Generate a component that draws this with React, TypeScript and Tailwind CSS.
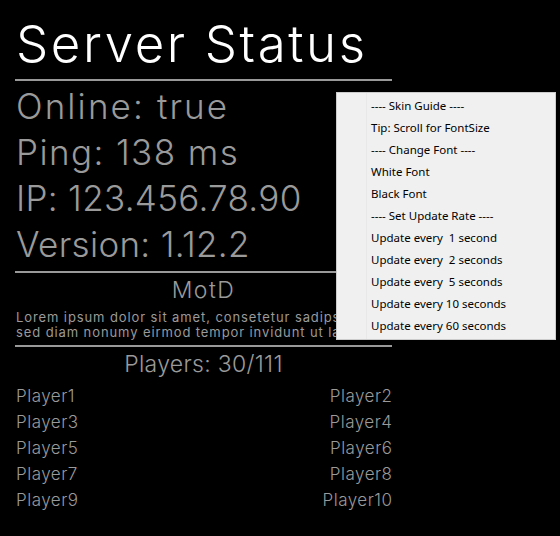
import React from "react";

const players = ["Player1","Player2","Player3","Player4","Player5","Player6","Player7","Player8","Player9","Player10"];
const menu = [
  "---- Skin Guide ----",
  "Tip: Scroll for FontSize",
  "---- Change Font ----",
  "White Font",
  "Black Font",
  "---- Set Update Rate ----",
  "Update every\u00a0 1 second",
  "Update every\u00a0 2 seconds",
  "Update every\u00a0 5 seconds",
  "Update every 10 seconds",
  "Update every 60 seconds",
];

export default function App() {
  return (
    <div className="relative w-[560px] h-[536px] bg-black overflow-hidden" style={{ fontFamily: "Inter, 'Noto Sans', sans-serif" }}>
      <div className="w-[377px] ml-[15px] flex flex-col">
        <div className="pt-[12px] text-white text-[51px] leading-[64px] font-light pl-[1px] tracking-[2.6px] whitespace-nowrap">Server Status</div>
        <div className="h-[2px] bg-[#999999] mt-[3px]" />
        <div className="flex flex-col text-[#9a9a9a] text-[35px] leading-[46px] font-light pl-[1px] pt-[2px] whitespace-nowrap">
          <div className="tracking-[2.1px]">Online: true</div>
          <div className="tracking-[1.4px]">Ping: 138 ms</div>
          <div className="tracking-[0.3px]">IP: 123.456.78.90</div>
          <div className="tracking-[0.3px]">Version: 1.12.2</div>
        </div>
        <div className="h-[2px] bg-[#999999] mt-[4px]" />
        <div className="mt-[3px] text-center text-[#9a9a9a] text-[23px] leading-[28px] font-light tracking-[1.5px]">MotD</div>
        <div className="mt-[6px] text-[#9a9a9a] text-[13px] leading-[15px] whitespace-nowrap pl-[1px] tracking-[0.9px]">
          <div>Lorem ipsum dolor sit amet, consetetur sadipscing elitr,</div>
          <div>sed diam nonumy eirmod tempor invidunt ut labore et</div>
        </div>
        <div className="h-[2px] bg-[#999999] mt-[5px]" />
        <div className="mt-[3px] text-center text-[#9a9a9a] text-[23px] leading-[28px] font-light tracking-[0.3px]">Players: 30/111</div>
        <div className="mt-[5px] grid grid-cols-2 text-[#9a9a9a] text-[17px] leading-[26px] font-light pl-[1px] tracking-[0.5px]">
          {players.map((p, i) => (
            <div key={p} className={i % 2 === 1 ? "text-right -mr-[0.5px]" : ""}>{p}</div>
          ))}
        </div>
      </div>
      <div className="absolute left-[336px] top-[92px] w-[220px] h-[248px] bg-[#f0f0f0] border border-[#cccccc] pt-[1px]" style={{ fontFamily: "'Noto Sans', 'Open Sans', sans-serif" }}>
        <div className="absolute left-[29px] top-0 bottom-0 w-px bg-[#e8e8e8]" />
        {menu.map((m, i) => (
          <div key={m} className={(i === 0 ? "h-[23px] leading-[23px] " : "h-[22px] leading-[22px] ") + "pl-[34px] text-[11.5px] text-black whitespace-pre"}>{m}</div>
        ))}
      </div>
    </div>
  );
}
